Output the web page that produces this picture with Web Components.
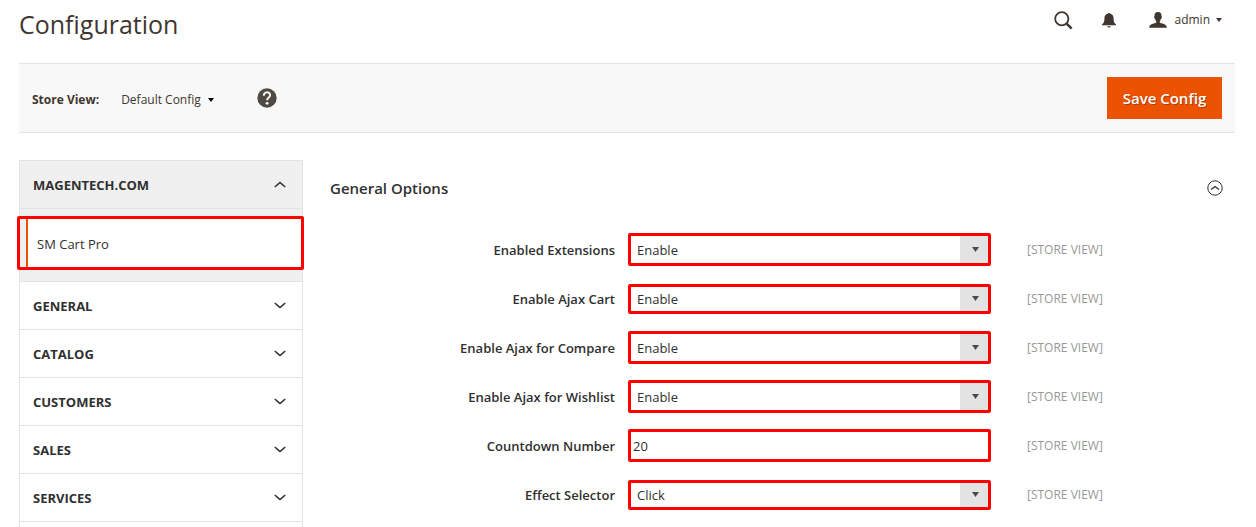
<!DOCTYPE html>
<html lang="en">
<head>
<meta charset="utf-8">
<title>Configuration</title>
<style>
body { margin: 0; background: #fff; color: #303030; font-family: "Open Sans", "Noto Sans", sans-serif; font-size: 13px; line-height: 20px; }
</style>
</head>
<body>
<config-page></config-page>
<script>
const define = (name, html, setup) => {
  const template = document.createElement('template');
  template.innerHTML = '<style>*{box-sizing:border-box}:host{display:block}</style>' + html;
  customElements.define(name, class extends HTMLElement {
    constructor() {
      super();
      this.attachShadow({ mode: 'open' }).append(template.content.cloneNode(true));
    }
    connectedCallback() { if (setup) setup(this, this.shadowRoot); }
  });
};

define('page-header', `
<style>
  header { display: flex; justify-content: space-between; align-items: flex-start; height: 63px; padding: 4px 13px 0 0; }
  h1 { margin: 0; font-size: 25px; line-height: 40px; font-weight: 400; color: #41362f; }
  nav { display: flex; align-items: center; height: 32px; color: #41362f; }
  button { display: flex; align-items: center; padding: 0; border: 0; background: none; color: inherit; font: inherit; font-size: 12px; }
  .bell { margin: 0 33px 0 29px; }
  .user svg:first-child { margin-right: 7px; }
  .user svg:last-child { margin-left: 6px; }
  svg { display: block; }
</style>
<header>
  <h1>Configuration</h1>
  <nav>
    <button type="button" aria-label="Search"><svg width="19" height="19" viewBox="0 0 19 19" fill="none" stroke="#41362f"><circle cx="7.8" cy="7.8" r="6.6" stroke-width="1.8"/><path d="M12.6 12.6 17.6 17.6" stroke-width="2.6"/></svg></button>
    <button type="button" class="bell" aria-label="Notifications"><svg width="14" height="16" viewBox="0 0 14 16" fill="#41362f"><path d="M6.1 1.5Q7 .2 7.9 1.500C10.500 2 11.600 4 11.600 6.500C11.600 9.600 12 11 14 12.500V13.300H0V12.500C2 11 2.400 9.600 2.400 6.500C2.400 4 3.500 2 6.100 1.500ZM5 14.300H9Q8.400 15.600 7 15.600T5 14.300Z"/></svg></button>
    <button type="button" class="user"><svg width="18" height="16" viewBox="0 0 18 16" fill="#41362f"><path d="M9 0C11.700 0 12.700 1.700 12.500 4.200C13.300 4.500 12.900 6.300 12.100 6.600C11.800 7.900 11.200 8.700 10.800 9.200V10.600C12 11.800 17.800 11.400 17.800 15.700H.2C.2 11.400 6 11.800 7.200 10.600V9.200C6.800 8.700 6.200 7.900 5.900 6.600C5.100 6.300 4.700 4.500 5.500 4.200C5.300 1.700 6.300 0 9 0Z"/></svg>admin<svg width="6" height="4" viewBox="0 0 6 4"><path d="M0 0H6L3 4Z" fill="#41362f"/></svg></button>
  </nav>
</header>`);

define('store-toolbar', `
<style>
  section { display: flex; align-items: center; height: 70px; padding: 0 13px; background: #f8f8f8; border: solid #e3e3e3; border-width: 1px 0; font-size: 12px; color: #41362f; }
  strong { margin: 3px 22px 0 0; font-weight: 700; }
  button { font: inherit; color: inherit; border: 0; padding: 0; background: none; }
  .view { display: flex; align-items: center; gap: 7px; margin: 3px 43px 0 0; }
  .help { display: flex; }
  .save { margin-left: auto; width: 115px; height: 42px; background: #eb5202; color: #fff; font-size: 15px; font-weight: 600; text-shadow: 1px 1px 0 rgba(0,0,0,.25); }
</style>
<section>
  <strong>Store View:</strong>
  <button type="button" class="view">Default Config <svg width="6" height="4" viewBox="0 0 6 4"><path d="M0 0H6L3 4Z"/></svg></button>
  <button type="button" class="help" aria-label="Help"><svg width="20" height="20" viewBox="0 0 20 20"><circle cx="10" cy="10" r="9.700" fill="#514943"/><path d="M6.800 7.700C6.800 3.300 13.200 3.400 13.100 7.200C13 9.500 10.100 9.500 10.100 12.300" fill="none" stroke="#f8f8f8" stroke-width="2"/><circle cx="10.100" cy="15.300" r="1.400" fill="#f8f8f8"/></svg></button>
  <button type="button" class="save">Save Config</button>
</section>`);

define('nav-section', `
<style>
  button { display: flex; justify-content: space-between; align-items: center; width: 100%; height: 47px; padding: 0 16px 0 13px; border: 0; background: none; font: inherit; font-weight: 700; color: #303030; text-transform: uppercase; }
  :host { border-bottom: 1px solid #e3e3e3; }
  :host([open]) { background: #f0f0f0; }
  :host([open]) svg { transform: rotate(180deg); }
  :host([open]) button { height: 48px; border-bottom: 1px solid #e3e3e3; }
  .items { display: none; }
  :host([open]) .items { display: block; padding: 7px 0 11px; }
</style>
<button type="button"><span></span><svg width="12" height="7" viewBox="0 0 12 7"><path d="M.8 1 6 5.500 11.200 1" fill="none" stroke="#303030" stroke-width="1.600"/></svg></button>
<div class="items"><slot></slot></div>`,
(host, root) => {
  root.querySelector('span').textContent = host.getAttribute('label');
  root.querySelector('button').setAttribute('aria-expanded', host.hasAttribute('open'));
});

define('nav-item', `
<style>
  :host { margin: 0 -2px 0 -3px; border: 3px solid #f00; border-radius: 2px; background: #f0f0f0; }
  a { display: block; margin-left: 6px; padding: 15px 9px 13px; border-left: 2px solid #eb5202; background: #fff; color: #303030; line-height: 20px; text-decoration: none; }
</style>
<a href="#"><slot></slot></a>`);

define('config-field', `
<style>
  :host { display: grid; grid-template-columns: minmax(0, 298fr) minmax(0, 363fr) minmax(0, 244fr); align-items: center; height: 49px; }
  label { padding-right: 13px; text-align: right; font-weight: 600; }
  .control { display: block; position: relative; height: 33px; border: 3px solid #f00; border-radius: 2px; }
  :host([compact]) .control { height: 30px; }
  input, select { display: block; width: 100%; height: 100%; margin: 0; border: 0; border-radius: 0; outline: 0; appearance: none; background: #fff; color: #303030; font: inherit; }
  input { padding: 0 2px; }
  select { padding: 0 36px 0 6px; }
  .arrow { position: absolute; top: 0; right: 0; bottom: 0; width: 28px; padding-left: 3px; display: grid; place-items: center; background: #e3e3e3; pointer-events: none; }
  small { padding-left: 36px; font-size: 12px; color: #989898; }
</style>
<label for="value"></label><span class="control"></span><small>[STORE VIEW]</small>`,
(host, root) => {
  root.querySelector('label').textContent = host.getAttribute('label');
  const value = host.getAttribute('value');
  const control = document.createElement(host.hasAttribute('text') ? 'input' : 'select');
  control.id = 'value';
  if (host.hasAttribute('text')) control.value = value;
  else control.add(new Option(value));
  const box = root.querySelector('.control');
  box.replaceChildren(control);
  if (!host.hasAttribute('text'))
    box.insertAdjacentHTML('beforeend', '<span class="arrow"><svg width="7" height="5" viewBox="0 0 7 5"><path d="M0 0H7L3.500 5Z" fill="#514943"/></svg></span>');
});

define('option-group', `
<style>
  header { display: flex; align-items: center; justify-content: space-between; height: 56px; padding-right: 12px; }
  h2 { margin: 0; font-size: 15px; font-weight: 600; }
  button { display: flex; padding: 0; border: 0; background: none; }
  .fields { padding-top: 9px; }
</style>
<header><h2><slot name="title"></slot></h2>
<button type="button" aria-label="Collapse"><svg width="16" height="16" viewBox="0 0 16 16" fill="none" stroke="#303030"><circle cx="8" cy="8" r="7.200"/><path d="M4 9.500 8 6.500 12 9.500" stroke-width="1.300"/></svg></button></header>
<div class="fields"><slot></slot></div>`);

define('config-page', `
<style>
  :host { padding: 0 21px 0 19px; }
  main { display: grid; grid-template-columns: 284px minmax(0, 1fr); column-gap: 27px; padding-top: 27px; }
  aside { padding-bottom: 5px; border: 1px solid #e3e3e3; border-bottom: 0; }
</style>
<page-header></page-header>
<store-toolbar></store-toolbar>
<main>
  <aside>
    <nav-section label="Magentech.com" open><nav-item>SM Cart Pro</nav-item></nav-section>
    <nav-section label="General"></nav-section>
    <nav-section label="Catalog"></nav-section>
    <nav-section label="Customers"></nav-section>
    <nav-section label="Sales"></nav-section>
    <nav-section label="Services"></nav-section>
  </aside>
  <option-group>
    <span slot="title">General Options</span>
    <config-field label="Enabled Extensions" value="Enable"></config-field>
    <config-field label="Enable Ajax Cart" value="Enable" compact></config-field>
    <config-field label="Enable Ajax for Compare" value="Enable"></config-field>
    <config-field label="Enable Ajax for Wishlist" value="Enable"></config-field>
    <config-field label="Countdown Number" value="20" text></config-field>
    <config-field label="Effect Selector" value="Click" compact></config-field>
  </option-group>
</main>`);
</script>
</body>
</html>
